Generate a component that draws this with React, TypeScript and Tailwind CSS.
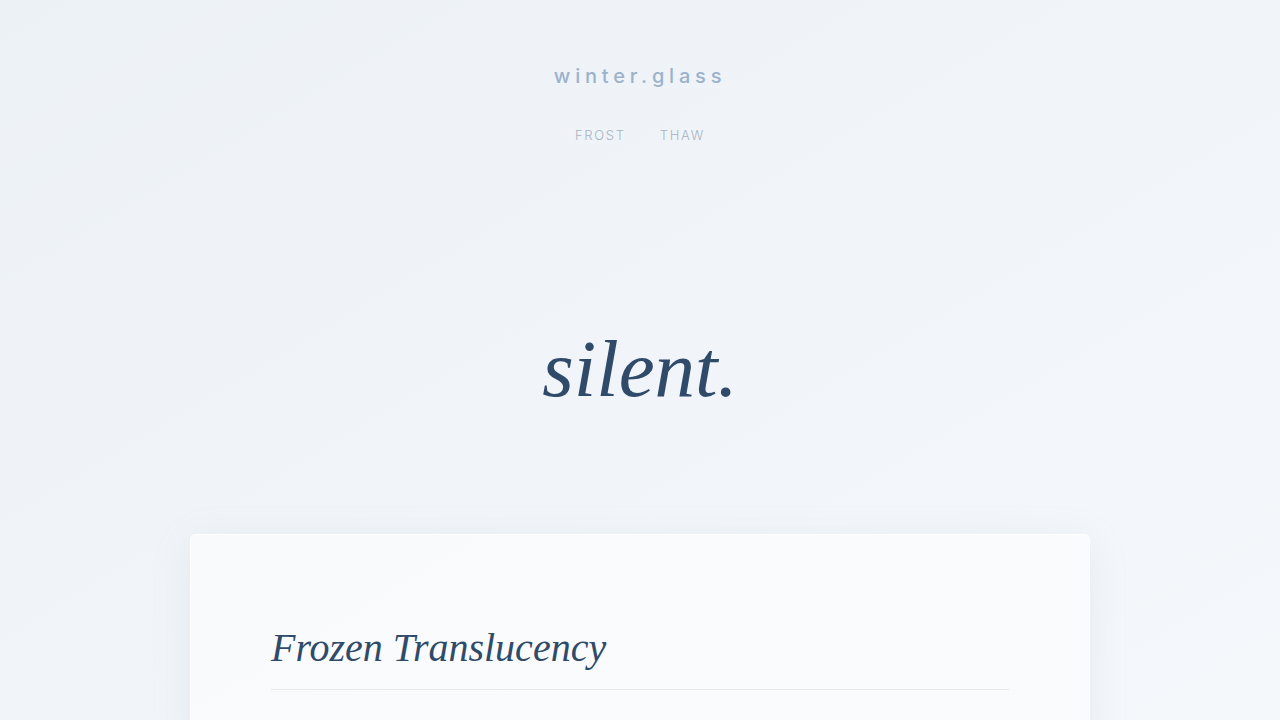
export default function App() {
  return (
    <div className="min-h-screen w-full bg-gradient-to-br from-[#ecf1f6] via-[#f1f5f9] to-[#f5f8fb] font-['Inter',sans-serif]">
      <header className="flex flex-col items-center pt-[62px]">
        <div className="text-[20px] font-medium tracking-[0.24em] text-[#9bb2cd] leading-[28px]">
          winter.glass
        </div>
        <nav className="mt-[35px] flex gap-[34px] text-[13px] font-light tracking-[0.13em] text-[#a9b3c1] leading-[20px]">
          <a href="#">FROST</a>
          <a href="#">THAW</a>
        </nav>
      </header>

      <section className="flex justify-center pt-[174px] pb-[115px]">
        <h1 className="font-['Liberation_Serif',serif] italic text-[81px] leading-[100px] text-[#2f4b69]">
          silent.
        </h1>
      </section>

      <main className="flex justify-center">
        <div className="w-[900px] rounded-md border border-white/80 bg-white/50 shadow-[0_8px_40px_rgba(148,163,184,0.14)] px-20 pt-[88px] pb-20">
          <h2 className="font-['Liberation_Serif',serif] italic text-[40px] leading-[50px] text-[#2f4b69]">
            Frozen Translucency
          </h2>
          <div className="mt-[16px] h-px bg-[#e6eaef]" />
        </div>
      </main>
    </div>
  );
}
